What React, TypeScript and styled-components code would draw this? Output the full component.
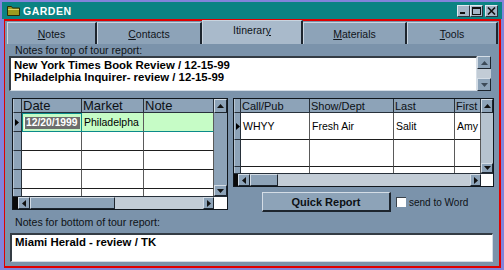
import React, { FC, ReactNode } from 'react';
import styled, { createGlobalStyle } from 'styled-components';

const FACE = '#8da3b8';
const PANEL = '#7b93ab';
const TRACK = '#c2ccd6';
const LIGHT = '#d4dde6';
const SHADOW = '#1d252e';
const LINE = '#27303a';
const FONT = '"Liberation Sans", Arial, sans-serif';

const GlobalStyle = createGlobalStyle`
  html, body { margin: 0; padding: 0; background: #8383da; }
  body { font-family: ${FONT}; }
  *, *::before, *::after { box-sizing: border-box; }
`;

// ---------- window chrome ----------

const Window = styled.div`
    width: 504px;
    height: 270px;
    padding: 2px;
    background: #8383da;
    display: flex;
    flex-direction: column;
    overflow: hidden;
`;

const TitleBar = styled.div`
    height: 17px;
    flex-shrink: 0;
    background: #0b8383;
    display: flex;
    align-items: center;
    padding: 0 4px 0 5px;
`;

const Title = styled.div`
    flex: 1;
    margin-left: 3px;
    color: #fff;
    font-weight: bold;
    font-size: 10.5px;
    letter-spacing: 0.5px;
`;

const Controls = styled.div`
    display: flex;
    align-items: center;
`;

const CtlButton = styled.div<{ $gap?: number }>`
    width: 13px;
    height: 12px;
    margin-left: ${ p => p.$gap || 0 }px;
    background: #a4b6c8;
    border: 1px solid;
    border-color: #e0e8f0 #2a323c #2a323c #e0e8f0;
    display: flex;
    align-items: center;
    justify-content: center;
`;

const Client = styled.div`
    flex: 1;
    min-height: 0;
    margin: 0 1px 0 2px;
    border: 2px solid #e00000;
    border-left-width: 1px;
    background: ${ PANEL };
    display: flex;
    flex-direction: column;
`;

// ---------- tabs ----------

const TabRow = styled.div`
    height: 23px;
    flex-shrink: 0;
    padding: 1px 0 0 2px;
    display: flex;
    align-items: flex-end;
`;

const Tab = styled.div<{ $w: number; $active?: boolean }>`
    position: relative;
    width: ${ p => p.$w }px;
    height: ${ p => p.$active ? 24 : 22 }px;
    flex-shrink: 0;
    background: ${ p => p.$active ? '#a9bacb' : FACE };
    border-top: 1px solid #c9d4df;
    border-left: 1px solid #c9d4df;
    border-right: 2px solid ${ SHADOW };
    padding-bottom: ${ p => p.$active ? 5 : 0 }px;
    display: flex;
    align-items: center;
    justify-content: center;
    font-size: 10.5px;
    color: #10141a;
`;

// ---------- panel ----------

const Panel = styled.div`
    flex: 1;
    min-height: 0;
    display: flex;
    flex-direction: column;
    padding: 1px 0 0 4px;
`;

const Label = styled.div<{ $top?: number }>`
    height: 11px;
    line-height: 11px;
    margin: ${ p => p.$top || 0 }px 0 0 6px;
    font-size: 10.6px;
    color: #0e1216;
    white-space: nowrap;
`;

const MemoRow = styled.div`
    display: flex;
    width: 482px;
    height: 35px;
    flex-shrink: 0;
`;

const Memo = styled.div<{ $w?: number; $h?: number }>`
    ${ p => p.$w ? `width: ${ p.$w }px; margin: 5px 0 0 1px;` : 'flex: 1;' }
    height: ${ p => p.$h || 35 }px;
    flex-shrink: 0;
    background: #fff;
    border-top: 2px solid #343c44;
    border-left: 2px solid #343c44;
    border-bottom: 1px solid ${ LIGHT };
    border-right: 1px solid ${ LIGHT };
    padding: 1px 3px;
    font-weight: bold;
    font-size: 11.4px;
    line-height: 12px;
    color: #000;
    white-space: nowrap;
    overflow: hidden;
`;

const MemoScroll = styled.div`
    width: 14px;
    display: flex;
    flex-direction: column;
    background: ${ TRACK };
`;

const ScrollBtn = styled.div<{ $w?: number; $h?: number }>`
    ${ p => p.$w ? `width: ${ p.$w }px;` : '' }
    ${ p => p.$h ? `height: ${ p.$h }px;` : '' }
    flex-shrink: 0;
    background: ${ FACE };
    border: 1px solid;
    border-color: ${ LIGHT } ${ SHADOW } ${ SHADOW } ${ LIGHT };
    display: flex;
    align-items: center;
    justify-content: center;
`;

const Fill = styled.div<{ $bg: string }>`
    flex: 1;
    background: ${ p => p.$bg };
`;

const GridsRow = styled.div`
    display: flex;
    align-items: flex-start;
    gap: 5px;
    height: 114px;
    margin: 7px 0 0 3px;
    flex-shrink: 0;
`;

const RightCol = styled.div`
    width: 261px;
    display: flex;
    flex-direction: column;
`;

const ButtonRow = styled.div`
    height: 20px;
    margin-top: 5px;
    display: flex;
    align-items: center;
`;

const QuickButton = styled.div`
    width: 129px;
    height: 20px;
    margin-left: 29px;
    background: ${ FACE };
    border-top: 1px solid ${ LIGHT };
    border-left: 1px solid ${ LIGHT };
    border-right: 2px solid ${ SHADOW };
    border-bottom: 2px solid ${ SHADOW };
    display: flex;
    align-items: center;
    justify-content: center;
    font-weight: bold;
    font-size: 11px;
    color: #0c1014;
`;

const CheckBox = styled.div`
    width: 10px;
    height: 10px;
    margin-left: 5px;
    background: #fff;
    border-top: 1px solid #3a424a;
    border-left: 1px solid #3a424a;
`;

const CheckLabel = styled.div`
    margin-left: 3px;
    font-size: 10px;
    color: #0e1216;
`;

// ---------- data grid ----------

const GridFrame = styled.div<{ $w: number; $h: number }>`
    width: ${ p => p.$w }px;
    height: ${ p => p.$h }px;
    flex-shrink: 0;
    border: 1px solid #10161c;
    background: #fff;
    display: flex;
    flex-direction: column;
`;

const GridBody = styled.div`
    flex: 1;
    min-height: 0;
    display: flex;
`;

const Table = styled.div<{ $cols: string; $headH: number; $rowH: number }>`
    flex: 1;
    display: grid;
    grid-template-columns: ${ p => p.$cols };
    grid-template-rows: ${ p => p.$headH }px;
    grid-auto-rows: ${ p => p.$rowH }px;
    align-content: start;
    overflow: hidden;
`;

const HeadCell = styled.div<{ $size: number }>`
    background: ${ FACE };
    border-right: 1px solid ${ LINE };
    border-bottom: 1px solid ${ LINE };
    padding-left: 1px;
    font-size: ${ p => p.$size }px;
    line-height: 14px;
    color: #0c1014;
    white-space: nowrap;
    overflow: hidden;
`;

const IndCell = styled.div`
    background: ${ FACE };
    border-left: 1px solid #b7c5d2;
    border-right: 1px solid ${ LINE };
    border-bottom: 1px solid ${ LINE };
    display: flex;
    align-items: center;
    padding-left: 1px;
`;

const Cell = styled.div<{ $hl?: boolean; $size: number }>`
    background: ${ p => p.$hl ? '#c6fcc6' : '#fff' };
    border-right: 1px solid #5a5a5a;
    border-bottom: 1px solid ${ p => p.$hl ? '#0b8a8a' : '#1e1e1e' };
    padding-left: 2px;
    display: flex;
    align-items: center;
    font-size: ${ p => p.$size }px;
    color: #000;
    white-space: nowrap;
    overflow: hidden;
`;

const EditCell = styled.div`
    border: 1px solid #0b8a8a;
    background: #c6fcc6;
    padding: 3px 1px 2px 1px;
    display: flex;
    overflow: hidden;
`;

const EditText = styled.span`
    flex: 1;
    border-left: 1px solid #f0fff0;
    background: #6d6d6d;
    color: #fff;
    font-weight: bold;
    font-size: 10.3px;
    line-height: 12px;
    padding-left: 1px;
    white-space: nowrap;
    overflow: hidden;
`;

const VBar = styled.div<{ $w: number }>`
    width: ${ p => p.$w }px;
    flex-shrink: 0;
    display: flex;
    flex-direction: column;
`;

const HBar = styled.div`
    height: 13px;
    flex-shrink: 0;
    display: flex;
    border-top: 1px solid ${ LINE };
`;

const Block = styled.div<{ $w: number; $bg: string; $bevel?: boolean }>`
    width: ${ p => p.$w }px;
    flex-shrink: 0;
    background: ${ p => p.$bg };
    ${ p => p.$bevel ? `border: 1px solid; border-color: ${ LIGHT } ${ SHADOW } ${ SHADOW } ${ LIGHT };` : '' }
`;

// ---------- drawings ----------

type Dir = 'up' | 'down' | 'left' | 'right';

const Arrow: FC<{ dir: Dir; color?: string }> = ( { dir, color = '#111' } ) => {
    const vertical = dir === 'up' || dir === 'down';
    const w = vertical ? 7 : 4;
    const h = vertical ? 4 : 7;
    const pts = {
        up: '0,4 3.5,0 7,4',
        down: '0,0 7,0 3.5,4',
        left: '4,0 4,7 0,3.5',
        right: '0,0 0,7 4,3.5',
    }[ dir ];
    return (
        <svg width={ w } height={ h } viewBox={ `0 0 ${ w } ${ h }` }>
            <polygon points={ pts } fill={ color } />
        </svg>
    );
};

const Folder: FC = () => (
    <svg width="13" height="10" viewBox="0 0 13 10">
        <path d="M0.5 0.5 h4 l1 1.5 h7 v7.5 h-12z" fill="#9d9a1e" stroke="#2a2a08" />
        <path d="M1 3.5 h11" stroke="#dcd56a" />
    </svg>
);

// ---------- grid component ----------

interface Column { label: string; w: number }
interface Row { cells: ReactNode[]; current?: boolean; hl?: boolean }

interface GridProps {
    width: number;
    height: number;
    indicator: number;
    columns: Column[];
    headSize: number;
    rowH: number;
    rows: Row[];
    vbar: number;
    vTrack: string;
    downH: number;
    hDark: number;
    hThumb: number;
}

const Grid: FC<GridProps> = ( props ): React.ReactElement => {
    const { columns, indicator, rows } = props;
    const template = [ indicator, ...columns.map( c => c.w ) ].map( w => `${ w }px` ).join( ' ' );
    const filled: Row[] = [ ...rows ];
    while ( filled.length < 6 ) filled.push( { cells: columns.map( () => '' ) } );

    return (
        <GridFrame $w={ props.width } $h={ props.height }>
            <GridBody>
                <Table $cols={ template } $headH={ 14 } $rowH={ props.rowH }>
                    <IndCell />
                    { columns.map( c => <HeadCell key={ c.label } $size={ props.headSize }>{ c.label }</HeadCell> ) }
                    { filled.map( ( row, r ) => (
                        <React.Fragment key={ r }>
                            <IndCell>{ row.current && <Arrow dir="right" color="#000" /> }</IndCell>
                            { row.cells.map( ( cell, c ) =>
                                React.isValidElement( cell )
                                    ? <React.Fragment key={ c }>{ cell }</React.Fragment>
                                    : <Cell key={ c } $hl={ row.hl } $size={ 10.5 }>{ cell }</Cell>
                            ) }
                        </React.Fragment>
                    ) ) }
                </Table>
                <VBar $w={ props.vbar }>
                    <ScrollBtn $h={ 14 }><Arrow dir="up" /></ScrollBtn>
                    <Fill $bg={ props.vTrack } />
                    <ScrollBtn $h={ props.downH }><Arrow dir="down" /></ScrollBtn>
                </VBar>
            </GridBody>
            <HBar>
                <Block $w={ props.hDark } $bg="#0a0a0a" />
                <ScrollBtn $w={ 12 }><Arrow dir="left" /></ScrollBtn>
                <Block $w={ props.hThumb } $bg={ FACE } $bevel />
                <Fill $bg={ TRACK } />
                <ScrollBtn $w={ 11 }><Arrow dir="right" /></ScrollBtn>
                <Block $w={ props.vbar } $bg="#fff" />
            </HBar>
        </GridFrame>
    );
};

// ---------- page ----------

const tabs = [
    { key: 'N', rest: 'otes', w: 90 },
    { key: 'C', rest: 'ontacts', w: 105 },
    { key: 'y', rest: 'Itinerar', w: 101, active: true },
    { key: 'M', rest: 'aterials', w: 104 },
    { key: 'T', rest: 'ools', w: 91 },
];

const App: FC = (): React.ReactElement => {
    return (
        <>
            <GlobalStyle />
            <Window>
                <TitleBar>
                    <Folder />
                    <Title>GARDEN</Title>
                    <Controls>
                        <CtlButton>
                            <svg width="9" height="8" viewBox="0 0 9 8"><rect x="1" y="5" width="5" height="2" fill="#111" /></svg>
                        </CtlButton>
                        <CtlButton>
                            <svg width="9" height="8" viewBox="0 0 9 8"><rect x="0.5" y="0.5" width="8" height="7" fill="none" stroke="#111" /><rect x="0" y="0" width="9" height="2" fill="#111" /></svg>
                        </CtlButton>
                        <CtlButton $gap={ 2 }>
                            <svg width="9" height="8" viewBox="0 0 9 8"><path d="M1 0.5 L8 7.5 M8 0.5 L1 7.5" stroke="#111" strokeWidth="1.6" /></svg>
                        </CtlButton>
                    </Controls>
                </TitleBar>

                <Client>
                    <TabRow>
                        { tabs.map( t => (
                            <Tab key={ t.rest } $w={ t.w } $active={ t.active }>
                                { t.active
                                    ? <span>{ t.rest }<u>{ t.key }</u></span>
                                    : <span><u>{ t.key }</u>{ t.rest }</span> }
                            </Tab>
                        ) ) }
                    </TabRow>

                    <Panel>
                        <Label>Notes for top of tour report:</Label>
                        <MemoRow>
                            <Memo>
                                New York Times Book Review / 12-15-99<br />
                                Philadelphia Inquirer- review / 12-15-99
                            </Memo>
                            <MemoScroll>
                                <ScrollBtn $h={ 13 }><Arrow dir="up" color="#3c4a58" /></ScrollBtn>
                                <Fill $bg={ TRACK } />
                                <ScrollBtn $h={ 13 }><Arrow dir="down" color="#3c4a58" /></ScrollBtn>
                            </MemoScroll>
                        </MemoRow>

                        <GridsRow>
                            <Grid
                                width={ 216 } height={ 112 } indicator={ 9 } headSize={ 13 } rowH={ 19 }
                                columns={ [ { label: 'Date', w: 60 }, { label: 'Market', w: 62 }, { label: 'Note', w: 70 } ] }
                                rows={ [ {
                                    current: true, hl: true,
                                    cells: [ <EditCell><EditText>12/20/1999</EditText></EditCell>, 'Philadelpha', '' ],
                                } ] }
                                vbar={ 13 } vTrack={ FACE } downH={ 11 } hDark={ 5 } hThumb={ 85 }
                            />
                            <RightCol>
                                <Grid
                                    width={ 261 } height={ 89 } indicator={ 7 } headSize={ 11 } rowH={ 27 }
                                    columns={ [ { label: 'Call/Pub', w: 69 }, { label: 'Show/Dept', w: 84 }, { label: 'Last', w: 61 }, { label: 'First', w: 26 } ] }
                                    rows={ [ { current: true, cells: [ 'WHYY', 'Fresh Air', 'Salit', 'Amy' ] } ] }
                                    vbar={ 12 } vTrack="#b6c3cf" downH={ 10 } hDark={ 4 } hThumb={ 28 }
                                />
                                <ButtonRow>
                                    <QuickButton>Quick Report</QuickButton>
                                    <CheckBox />
                                    <CheckLabel>send to Word</CheckLabel>
                                </ButtonRow>
                            </RightCol>
                        </GridsRow>

                        <Label $top={ 5 }>Notes for bottom of tour report:</Label>
                        <Memo $w={ 483 } $h={ 29 }>Miami Herald - review / TK</Memo>
                    </Panel>
                </Client>
            </Window>
        </>
    );
};

export default App;
